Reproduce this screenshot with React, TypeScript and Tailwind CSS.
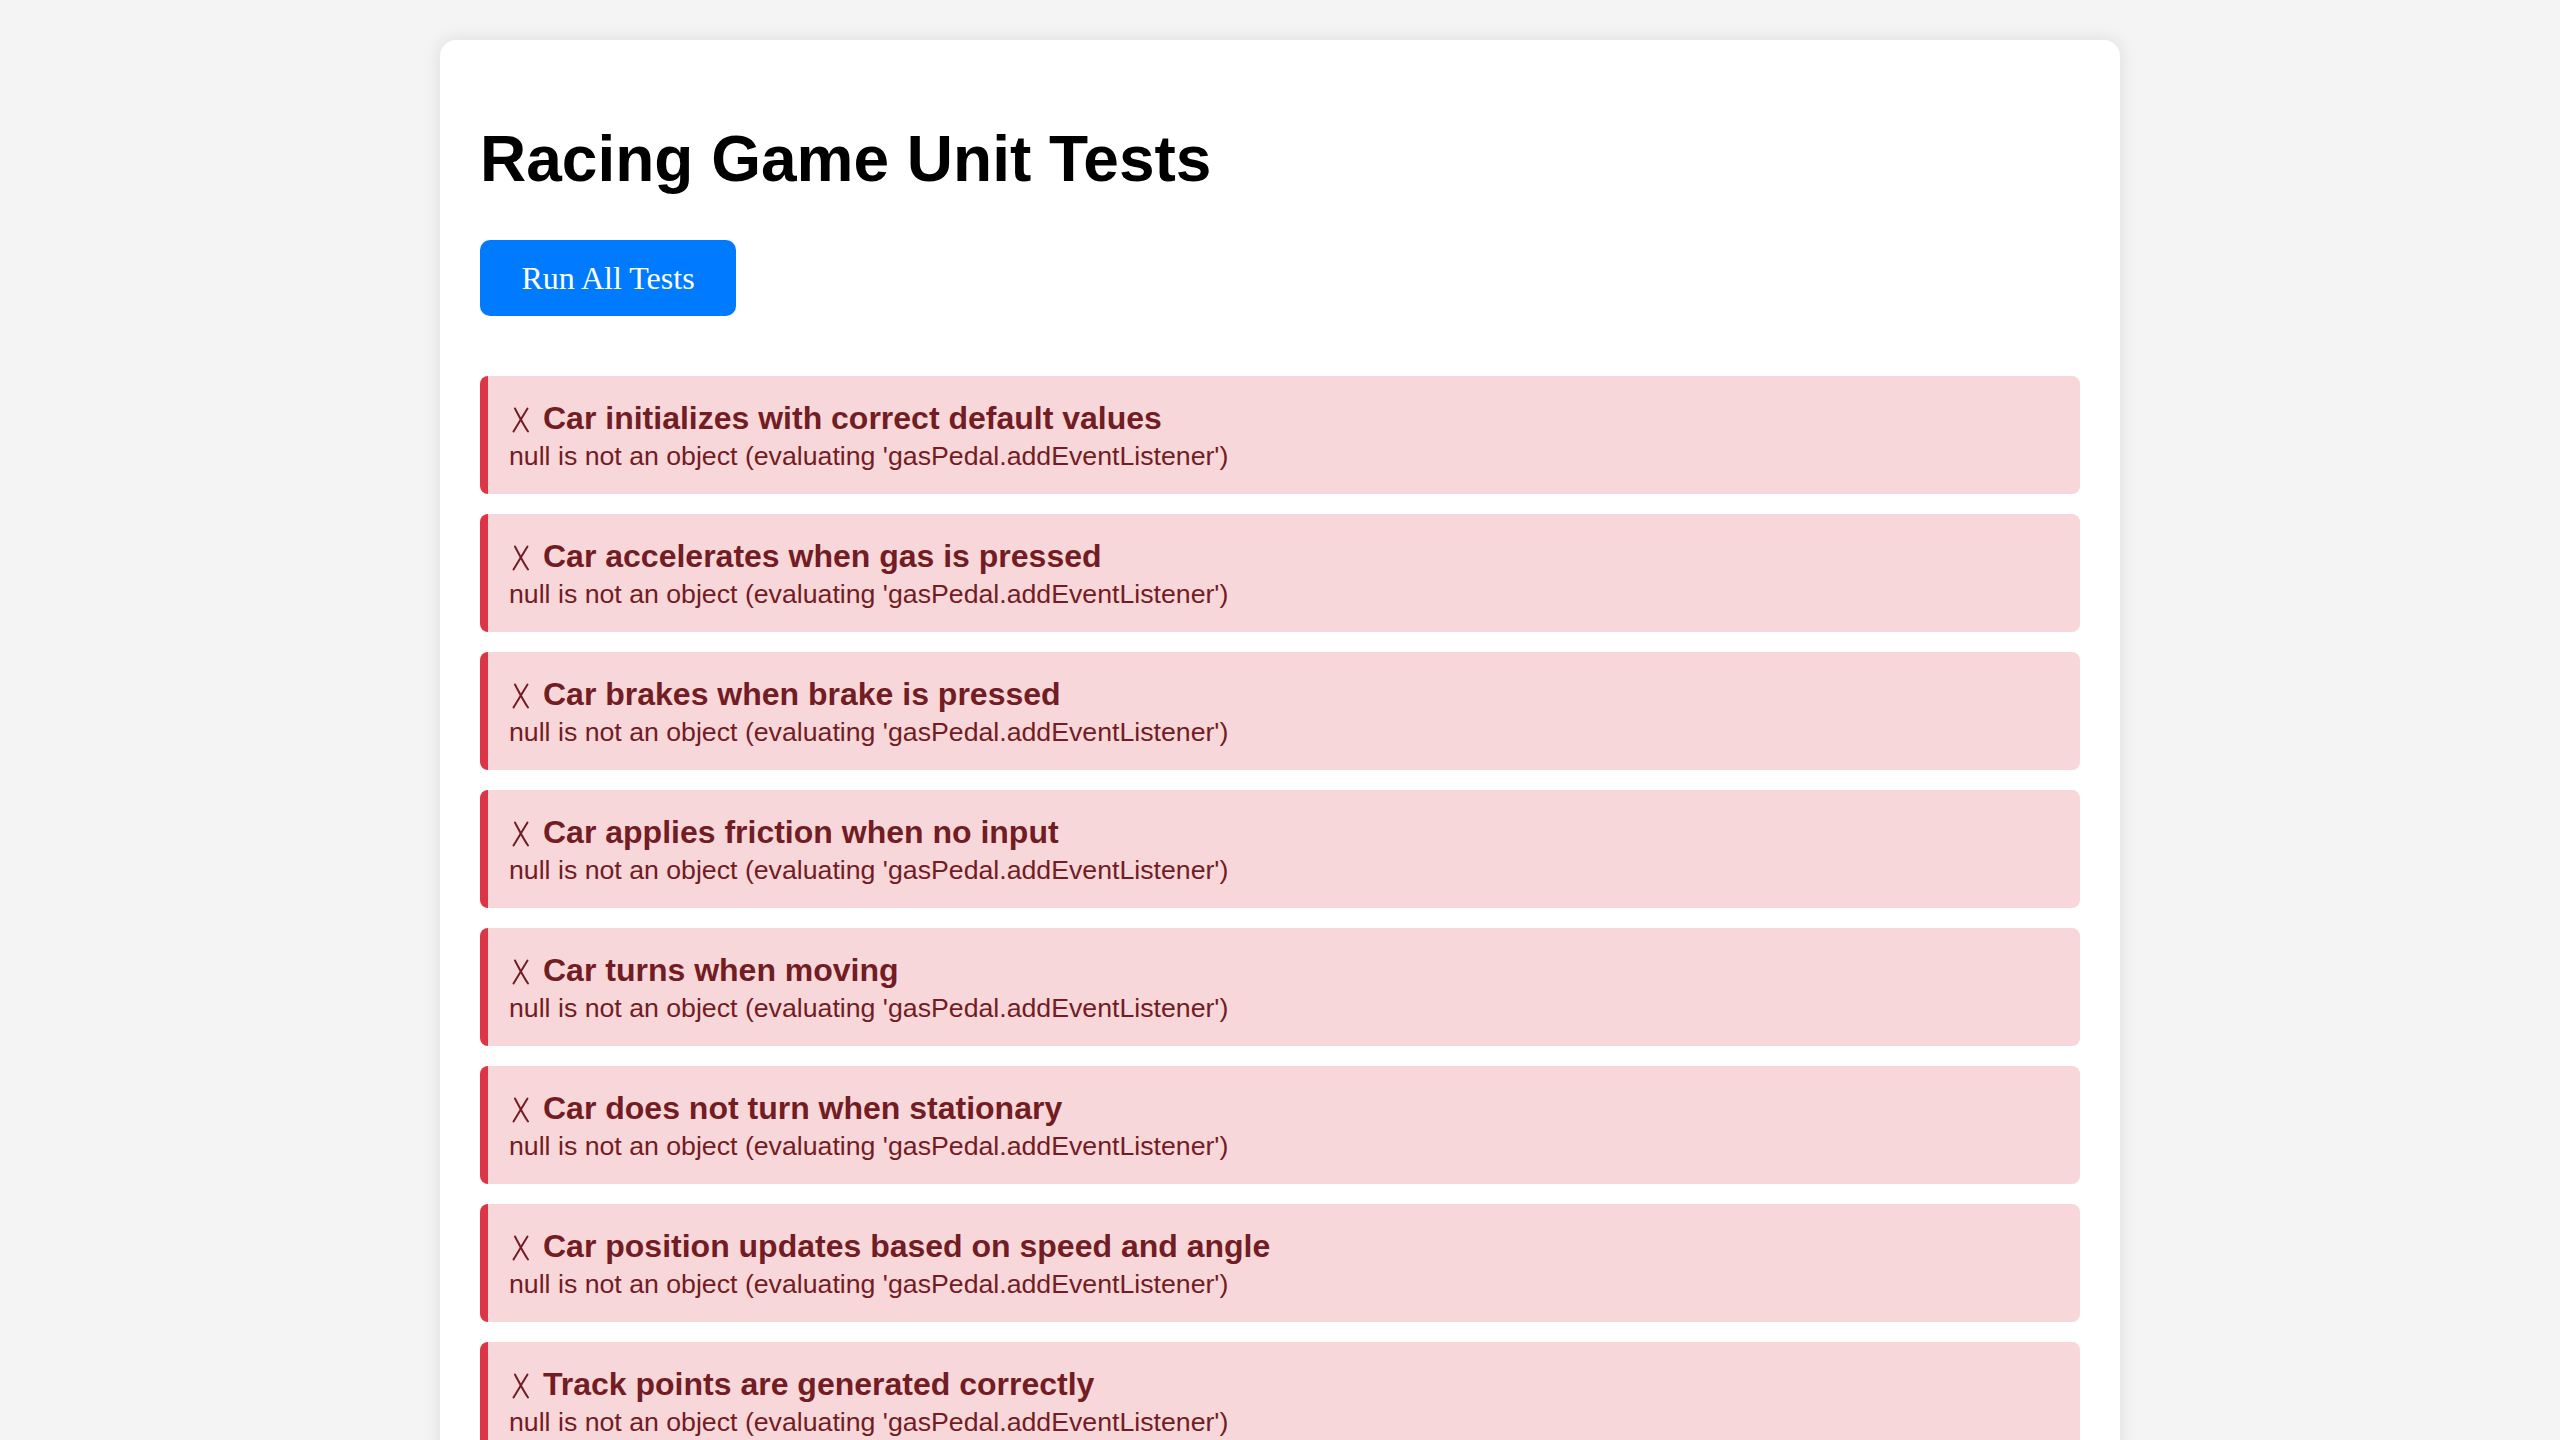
const tests = [
  'Car initializes with correct default values',
  'Car accelerates when gas is pressed',
  'Car brakes when brake is pressed',
  'Car applies friction when no input',
  'Car turns when moving',
  'Car does not turn when stationary',
  'Car position updates based on speed and angle',
  'Track points are generated correctly',
  'Car stays within track boundaries',
  'Lap counter increments after full lap',
];

const errorMessage = "null is not an object (evaluating 'gasPedal.addEventListener')";

// thin ballot x, the font glyph is too heavy here
function FailMark() {
  return (
    <svg
      viewBox="0 0 18 26"
      className="mr-[13px] ml-[3px] inline-block h-[26px] w-[18px] align-[-4px]"
      fill="none"
      stroke="currentColor"
      strokeWidth="2"
      strokeLinecap="round"
      aria-label="failed"
    >
      <path d="M3 1.5 C7 9 11 17 16 24.5" />
      <path d="M15.5 1.5 C11 9 6 17 1.5 24.5" />
    </svg>
  );
}

function TestResult({ name }: { name: string }) {
  return (
    <div className="h-[118px] rounded-lg border-l-8 border-[#dc3545] bg-[#f8d7da] pt-6 pr-6 pl-[21px] text-[#721c24]">
      <div className="h-[37px] text-[32px] font-bold leading-[37px]">
        <FailMark />
        {name}
      </div>
      <div className="mt-1 text-[26.7px] leading-[31px]">{errorMessage}</div>
    </div>
  );
}

export default function App() {
  return (
    <div className="min-h-screen bg-[#f4f4f4] px-10 pt-10 font-['Liberation_Sans',Arial,sans-serif]">
      <div className="mx-auto w-[1680px] rounded-2xl bg-white p-10 shadow-[0_0_20px_rgba(0,0,0,0.1)]">
        <h1 className="mt-[42px] mb-[44px] text-[64px] font-bold leading-[74px] text-black">
          Racing Game Unit Tests
        </h1>
        <button className="h-[76px] w-[256px] rounded-[10px] bg-[#007bff] font-['Liberation_Serif','Times_New_Roman',serif] text-[32px] text-white">
          Run All Tests
        </button>
        <div className="mt-[60px] flex flex-col gap-5">
          {tests.map((t) => (
            <TestResult key={t} name={t} />
          ))}
        </div>
      </div>
    </div>
  );
}
